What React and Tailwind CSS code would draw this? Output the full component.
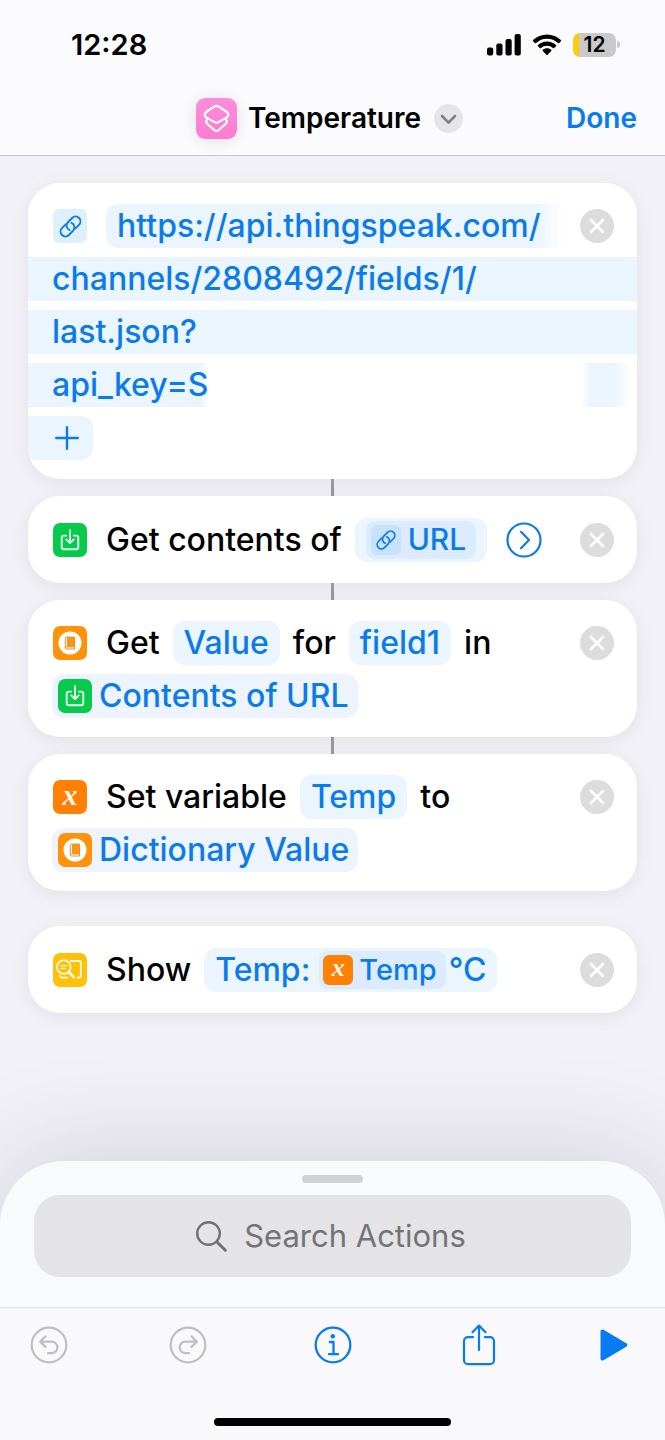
import React from "react";

function ShortcutsLogo() {
  return (
    <svg viewBox="0 0 41 41" className="size-[41px] shrink-0 rounded-[9px] shadow-[0_2px_16px_rgba(0,0,0,0.10)]" aria-hidden="true">
      <defs>
        <linearGradient id="pink" x1="0" y1="0" x2="0" y2="1">
          <stop offset="0" stopColor="#fb8edb" />
          <stop offset="1" stopColor="#fc7bd0" />
        </linearGradient>
      </defs>
      <rect width="41" height="41" fill="url(#pink)" />
      <g fill="none" stroke="#fff" strokeWidth="2.2" strokeLinejoin="round" strokeLinecap="round">
        <path d="M18.200 8.600q2.300-1.600 4.600 0l7.400 4.900q4.400 3.200 0 6.400l-7.400 4q-2.300 1.400-4.600 0l-7.400-4q-4.400-3.200 0-6.400Z" />
        <path d="M11.700 20.500q-3.200 3.100.2 6l6.300 5.500q2.300 1.800 4.600 0l6.300-5.500q3.400-2.900.2-6" />
      </g>
    </svg>
  );
}

function LinkGlyph({ className }) {
  return (
    <svg viewBox="0 0 24 24" className={className} fill="none" stroke="#0c7bea" strokeWidth="1.700" strokeLinecap="round" aria-hidden="true">
      <g transform="rotate(-45 12 12)">
        <path d="M10.300 7.700H5.600a4.300 4.300 0 0 0 0 8.600h5.300a4.300 4.300 0 0 0 3.900-6" />
        <path d="M13.700 16.300h4.700a4.300 4.300 0 0 0 0-8.600h-5.300a4.300 4.300 0 0 0-3.900 6" />
      </g>
    </svg>
  );
}

function LinkTile({ className, glyph }) {
  return (
    <span className={`grid shrink-0 place-items-center ${className}`}>
      <LinkGlyph className={glyph} />
    </span>
  );
}

function DownloadTile() {
  return (
    <svg viewBox="0 0 34 34" className="size-[34px] shrink-0" aria-hidden="true">
      <rect width="34" height="34" rx="7" fill="#05ca4c" />
      <g fill="none" stroke="#e9fff0" strokeWidth="1.900" strokeLinecap="round" strokeLinejoin="round">
        <path d="M13.200 12.600h-2.500a2 2 0 0 0-2 2v9.700a2 2 0 0 0 2 2h12.600a2 2 0 0 0 2-2v-9.700a2 2 0 0 0-2-2h-2.500" />
        <path d="M17 7.200v12.600M13.200 16.400l3.800 3.800 3.800-3.800" />
      </g>
    </svg>
  );
}

function DictionaryTile() {
  return (
    <svg viewBox="0 0 34 34" className="size-[34px] shrink-0" aria-hidden="true">
      <rect width="34" height="34" rx="7" fill="#ff9208" />
      <circle cx="17" cy="17" r="11.500" fill="#fff" />
      <path d="M14 11.200h7.300v9.600H14Z" fill="#fb9410" />
      <path d="M21.600 20.900v2.100h-8a1.300 1.300 0 0 1-1.300-1.300v-9.300a1.300 1.300 0 0 1 1.300-1.300h8v9.800h-8a1.100 1.100 0 0 0-1.200 1" fill="none" stroke="#d9840f" strokeWidth="0.900" />
    </svg>
  );
}

function VariableTile({ small }) {
  return (
    <span
      className={`grid shrink-0 place-items-center bg-[#ff8104] font-['Liberation_Serif',serif] font-bold text-[#fff6ea] italic ${
        small ? "size-[30px] rounded-[6px] pb-[4px] text-[26px] leading-none" : "size-[34px] rounded-[7px] pb-[4px] text-[30px] leading-none"
      }`}
    >
      x
    </span>
  );
}

function ShowTile() {
  return (
    <svg viewBox="0 0 34 34" className="size-[34px] shrink-0" aria-hidden="true">
      <rect width="34" height="34" rx="7" fill="#ffc107" />
      <g fill="none" stroke="#fffbe8" strokeWidth="1.800" strokeLinecap="round" strokeLinejoin="round">
        <circle cx="10.800" cy="14" r="6.800" />
        <path d="M15.800 19l4.800 5" strokeWidth="2.800" />
        <path d="M7.800 12.600h6M7.800 15.400h4" strokeWidth="1.300" />
        <path d="M17.800 8h8a2 2 0 0 1 2 2v12.600a2 2 0 0 1-2 2h-1.600M7 23v0a1.800 1.800 0 0 0 1.800 1.600h5.600" />
      </g>
    </svg>
  );
}

function RemoveButton() {
  return (
    <button type="button" aria-label="Remove action" className="size-[34px] shrink-0">
      <svg viewBox="0 0 34 34" className="size-full">
        <circle cx="17" cy="17" r="17" fill="#dcdcdd" />
        <path d="M11 11l12 12M23 11L11 23" stroke="#fff" strokeWidth="2.600" strokeLinecap="round" />
      </svg>
    </button>
  );
}

function Card({ children, compact }) {
  return (
    <section
      className={`flex flex-col justify-center gap-[9px] overflow-hidden rounded-[32px] bg-white shadow-[0_4px_18px_rgba(30,30,60,0.07)] ${
        compact ? "min-h-[87px]" : "pt-[21px] pb-[19px]"
      }`}
    >
      {children}
    </section>
  );
}

function Row({ icon, children }) {
  return (
    <div className="flex h-11 items-center pr-[23px] pl-[25px]">
      {icon}
      <div className="ml-[19px] flex flex-1 items-center gap-[13px] whitespace-nowrap">{children}</div>
      <RemoveButton />
    </div>
  );
}

function Token({ children, className = "px-[11px]" }) {
  return (
    <button type="button" className={`flex h-11 items-center rounded-[12px] bg-[#eaf5fe] text-[#0c7bea] ${className}`}>
      {children}
    </button>
  );
}

function WideToken({ icon, children }) {
  return (
    <div className="flex h-11 items-center px-6">
      <button type="button" className="flex h-11 items-center gap-[7px] rounded-[12px] bg-[#edf4fe] pr-[9px] pl-[6px] whitespace-nowrap text-[#0c7bea]">
        {icon}
        {children}
      </button>
    </div>
  );
}

function Connector() {
  return <div className="mx-auto h-[17px] w-[3px] bg-[#98989f]" />;
}

function StatusBar() {
  return (
    <div className="flex h-[81px] items-center justify-between pt-[8px] pr-[45px] pl-[71px]">
      <span className="text-[29px] font-semibold text-black">12:28</span>
      <div className="flex items-center gap-[11px]">
        <svg viewBox="0 0 34 22" className="h-[22px] w-[34px]" aria-label="Signal">
          <rect x="0" y="13.500" width="6.200" height="8" rx="2" />
          <rect x="9.300" y="9.500" width="6.200" height="12" rx="2" />
          <rect x="18.500" y="5" width="6.200" height="16.500" rx="2" />
          <rect x="27.600" y="0" width="6.200" height="21.500" rx="2" />
        </svg>
        <svg viewBox="0 0 30 22" className="h-[22px] w-[30px]" aria-label="Wi-Fi">
          <path d="M15 0.500c5.400 0 10.300 2.100 13.900 5.500.4.400.4.900 0 1.300l-1.700 1.700c-.4.400-.9.400-1.300 0A15.700 15.700 0 0 0 15 4.700 15.700 15.700 0 0 0 4.100 9c-.4.400-.9.400-1.300 0L1.100 7.300c-.4-.4-.4-.9 0-1.300C4.700 2.600 9.600.500 15 .500Z" />
          <path d="M15 7.500c3.500 0 6.600 1.300 9 3.500.4.400.4.900 0 1.300l-1.800 1.800c-.4.400-.8.400-1.200 0A9 9 0 0 0 15 11.800a9 9 0 0 0-6 2.300c-.4.400-.8.400-1.200 0L6 12.300c-.4-.4-.4-.9 0-1.300 2.400-2.200 5.500-3.500 9-3.500Z" />
          <path d="M15 14.300c1.600 0 3 .5 4.200 1.500.4.400.4.900 0 1.300l-3.600 3.700c-.4.400-.8.400-1.200 0l-3.600-3.700c-.4-.4-.4-.9 0-1.300 1.200-1 2.600-1.500 4.200-1.500Z" />
        </svg>
        <div className="flex items-center gap-[1px]">
          <div className="flex h-6 w-[43px] items-center justify-center overflow-hidden rounded-[7px] bg-[linear-gradient(90deg,#fdca0e_6px,#c9c9cb_6px)] text-[21px] font-semibold text-black">
            12
          </div>
          <div className="h-[7px] w-[3px] rounded-r-full bg-[#c9c9cb]" />
        </div>
      </div>
    </div>
  );
}

function Header() {
  return (
    <header className="border-b border-[#c6c6ca] bg-[#fbfbfd]">
      <StatusBar />
      <div className="grid h-[74px] grid-cols-[1fr_auto_1fr] items-center px-7">
        <button type="button" className="col-start-2 flex items-center pr-[6px] text-[28px] font-semibold text-black">
          <ShortcutsLogo />
          <h1 className="ml-[11px]">Temperature</h1>
          <svg viewBox="0 0 29 29" className="ml-[13px] size-[29px]" aria-hidden="true">
            <circle cx="14.500" cy="14.500" r="14.500" fill="#e5e5e8" />
            <path d="M8 12l6.500 6.700L21 12" fill="none" stroke="#808085" strokeWidth="2.600" strokeLinecap="round" strokeLinejoin="round" />
          </svg>
        </button>
        <button type="button" className="justify-self-end text-[28px] font-semibold text-[#087bf2]">
          Done
        </button>
      </div>
    </header>
  );
}

function UrlCard() {
  return (
    <Card>
      <div className="flex h-11 items-center pr-[23px] pl-[25px] text-[#0c7bea]">
        <LinkTile className="size-[34px] rounded-[6px] bg-[#dff0fd]" glyph="size-[27px]" />
        <div className="mr-[16px] ml-[19px] flex h-11 flex-1 items-center rounded-l-[12px] bg-[linear-gradient(90deg,#eaf5fe_94%,#ffffff)] pl-[11px]">
          https://api.thingspeak.com/
        </div>
        <RemoveButton />
      </div>
      <div className="flex h-11 items-center bg-[#eaf5fe] px-6 text-[#0c7bea]">channels/2808492/fields/1/</div>
      <div className="flex h-11 items-center bg-[#eaf5fe] px-6 text-[#0c7bea]">last.json?</div>
      <div className="flex h-11 items-center justify-between pr-[6px] text-[#0c7bea]">
        <span className="flex h-11 items-center bg-[linear-gradient(90deg,#eaf5fe_96%,#ffffff)] pl-6">api_key=S</span>
        <span className="h-11 w-[50px] bg-[linear-gradient(90deg,#ffffff,#eaf5fe_20%,#eaf5fe_64%,#ffffff)]" />
      </div>
      <button type="button" aria-label="Add parameter" className="flex h-11 w-[65px] items-center rounded-r-[12px] bg-[#eaf5fe] pl-[27px]">
        <svg viewBox="0 0 24 24" className="size-6" fill="none" stroke="#0c7bea" strokeWidth="2.400" strokeLinecap="round">
          <path d="M12 1.200v21.600M1.200 12h21.600" />
        </svg>
      </button>
    </Card>
  );
}

function ActionList() {
  return (
    <main className="flex-1 px-7 pt-[27px] pb-[146px] text-[32px] font-medium text-black">
      <UrlCard />
      <Connector />
      <Card compact>
        <Row icon={<DownloadTile />}>
          <span>Get contents of</span>
          <Token className="px-[11px]">
            <span className="flex h-[38px] items-center gap-[7px] rounded-[9px] bg-[#dcecfe] pr-[10px] pl-[5px] text-[30px]">
              <LinkTile className="size-[30px] rounded-[6px] bg-[#c7e2fb]" glyph="size-6" />
              URL
            </span>
          </Token>
          <button type="button" aria-label="Show more" className="ml-[6px] size-9">
            <svg viewBox="0 0 36 36" className="size-full" fill="none" stroke="#0c7bea" strokeWidth="2.200" strokeLinecap="round" strokeLinejoin="round">
              <circle cx="18" cy="18" r="16.500" />
              <path d="M15 9.800l8 8.200-8 8.200" />
            </svg>
          </button>
        </Row>
      </Card>
      <Connector />
      <Card>
        <Row icon={<DictionaryTile />}>
          <span>Get</span>
          <Token>Value</Token>
          <span>for</span>
          <Token>field1</Token>
          <span>in</span>
        </Row>
        <WideToken icon={<DownloadTile />}>Contents of URL</WideToken>
      </Card>
      <Connector />
      <Card>
        <Row icon={<VariableTile />}>
          <span>Set variable</span>
          <Token>Temp</Token>
          <span>to</span>
        </Row>
        <WideToken icon={<DictionaryTile />}>Dictionary Value</WideToken>
      </Card>
      <div className="h-[35px]" />
      <Card compact>
        <Row icon={<ShowTile />}>
          <span>Show</span>
          <Token>
            Temp:
            <span className="mr-[3px] ml-[9px] flex h-[38px] items-center gap-[6px] rounded-[9px] bg-[#dcecfe] pr-[9px] pl-[4px] text-[29px]">
              <VariableTile small />
              Temp
            </span>
            °C
          </Token>
        </Row>
      </Card>
    </main>
  );
}

const toolClass = "flex h-[42px] items-center justify-center";

function BottomSheet() {
  return (
    <footer className="rounded-t-[64px] bg-[#f8fafc] shadow-[0_0_110px_rgba(40,30,60,0.17)]">
      <div className="px-[34px] pt-[14px] pb-[30px]">
        <div className="mx-auto h-2 w-[61px] rounded-full bg-[#d0d2d4]" />
        <label className="mt-[12px] flex h-[82px] items-center justify-center gap-[17px] rounded-[26px] bg-[#e4e4e6] pr-[3px]">
          <svg viewBox="0 0 31 31" className="size-[31px] shrink-0" fill="none" stroke="#707075" strokeLinecap="round" aria-hidden="true">
            <circle cx="12.500" cy="12.500" r="11.300" strokeWidth="2.400" />
            <path d="M21 21l8.300 8.300" strokeWidth="3" />
          </svg>
          <input
            type="text"
            aria-label="Search Actions"
            placeholder="Search Actions"
            className="field-sizing-content bg-transparent text-[31px] text-black outline-none placeholder:text-[#737378]"
          />
        </label>
      </div>
      <div className="border-t border-[#e4e5e7] bg-[#f9f9fb] pb-[14px]">
        <nav aria-label="Editor" className="flex items-center justify-between pt-4 pr-[37px] pl-[30px]">
          <button type="button" aria-label="Undo" className={toolClass}>
            <svg viewBox="0 0 38 38" className="size-[38px]" fill="none" stroke="#bfbfc0" strokeWidth="2.200" strokeLinecap="round" strokeLinejoin="round">
              <circle cx="19" cy="19" r="17.300" />
              <path d="M15.500 10.300l-5.300 5.300 5.300 5.300M10.600 15.600h11a5.600 5.600 0 0 1 0 11.600h-3.600" />
            </svg>
          </button>
          <button type="button" aria-label="Redo" className={toolClass}>
            <svg viewBox="0 0 38 38" className="size-[38px]" fill="none" stroke="#bfbfc0" strokeWidth="2.200" strokeLinecap="round" strokeLinejoin="round">
              <circle cx="19" cy="19" r="17.300" />
              <path d="M22.500 10.300l5.300 5.300-5.300 5.300M27.400 15.600h-11a5.600 5.600 0 0 0 0 11.600H20" />
            </svg>
          </button>
          <button type="button" aria-label="Details" className={`${toolClass} w-[50px]`}>
            <svg viewBox="0 0 38 38" className="size-[38px]" fill="none" stroke="#087bf2" strokeWidth="2.300" strokeLinecap="round" strokeLinejoin="round">
              <circle cx="19" cy="19" r="17.300" />
              <path d="M15.800 16h3.700v12M15 28.200h9" />
              <circle cx="18.800" cy="10.300" r="2.200" fill="#087bf2" stroke="none" />
            </svg>
          </button>
          <button type="button" aria-label="Share" className={`${toolClass} w-[40px]`}>
            <svg viewBox="0 0 34 42" className="h-[42px] w-[34px]" fill="none" stroke="#087bf2" strokeWidth="2.200" strokeLinecap="round" strokeLinejoin="round">
              <path d="M11 13.200H6a4 4 0 0 0-4 4v19a4 4 0 0 0 4 4h22a4 4 0 0 0 4-4v-19a4 4 0 0 0-4-4h-5" />
              <path d="M17 26V2M10.500 8.300L17 1.600l6.500 6.700" />
            </svg>
          </button>
          <button type="button" aria-label="Run" className={toolClass}>
            <svg viewBox="0 0 28 32" className="h-8 w-7" fill="#087bf2" aria-hidden="true">
              <path d="M0.500 2.600c0-1.800 1.500-2.600 3-1.800l22.800 13.500c1.500.9 1.500 2.500 0 3.400L3.500 31.200c-1.500.8-3 0-3-1.800Z" />
            </svg>
          </button>
        </nav>
        <div className="mx-auto mt-[52px] h-2 w-[237px] rounded-full bg-black" />
      </div>
    </footer>
  );
}

export default function App() {
  return (
    <div className="flex min-h-screen flex-col overflow-hidden bg-[#f2f1f7] font-['Inter',sans-serif]">
      <Header />
      <ActionList />
      <BottomSheet />
    </div>
  );
}
